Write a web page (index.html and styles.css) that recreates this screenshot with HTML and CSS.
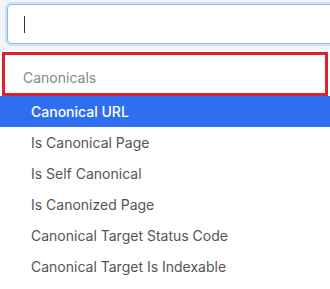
FILE: index.html
```html
<!DOCTYPE html>
<html>

<head>
    <meta charset="UTF-8">
    <meta name="viewport" content="width=device-width, initial-scale=1.0">
    <title>Column picker</title>
    <link rel="stylesheet" href="styles.css">
</head>

<body>
    <div class="search-bar">
        <div class="search-input">
            <span class="caret"></span>
        </div>
    </div>

    <div class="dropdown">
        <div class="group-title">Canonicals</div>
        <ul class="options">
            <li class="option selected">Canonical URL</li>
            <li class="option">Is Canonical Page</li>
            <li class="option">Is Self Canonical</li>
            <li class="option">Is Canonized Page</li>
            <li class="option">Canonical Target Status Code</li>
            <li class="option">Canonical Target Is Indexable</li>
        </ul>
    </div>
</body>

</html>
```

FILE: styles.css
```css
* {
    margin: 0;
    padding: 0;
    box-sizing: border-box;
}

body {
    font-family: 'Inter', 'Noto Sans', sans-serif;
    font-size: 14px;
    background-color: #fff;
    overflow: hidden;
}

.search-bar {
    background-color: #f3f5f8;
    padding: 4px 0 6px 7px;
    overflow: hidden;
}

/* the field runs on past the right edge of the panel */
.search-input {
    width: calc(100% + 10px);
    height: 40px;
    background-color: #fff;
    border: 1px solid #8fbaf2;
    border-radius: 5px;
    box-shadow: 0 0 0 2px #cde0fa;
    display: flex;
    align-items: center;
    padding-left: 16px;
}

.caret {
    width: 1px;
    height: 17px;
    background-color: #333;
}

.dropdown {
    padding-top: 2px;
}

.group-title {
    margin: 0 2px;
    height: 44px;
    border: 3px solid #d9232f;
    color: #888;
    padding: 14px 0 0 18px;
    line-height: 17px;
}

.options {
    list-style: none;
}

.option {
    height: 31px;
    line-height: 31px;
    padding-left: 31px;
    color: #555;
}

.option.selected {
    background-color: #2e6ff2;
    color: #fff;
    font-weight: 500;
}
```
